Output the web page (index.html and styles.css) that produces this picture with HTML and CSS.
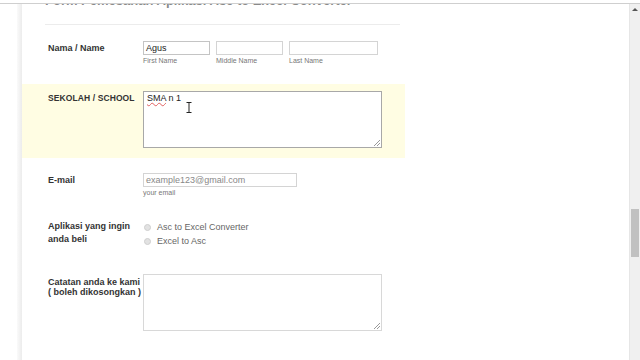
FILE: index.html
```html
<!DOCTYPE html>
<html>
<head>
<meta charset="utf-8">
<link rel="stylesheet" href="styles.css">
</head>
<body>
<div class="topline"></div>
<div class="frame">
  <div class="main">
    <div class="gutter"></div>
    <div class="shadow"></div>
    <div class="panel">
      <div class="titlebox">
        <div class="title">Form Pemesanan Aplikasi Asc to Excel Converter</div>
      </div>
      <div class="row row-name">
        <div class="label">Nama / Name</div>
        <div class="field names">
          <div class="namecol">
            <div class="input in-first">Agus</div>
            <div class="sub">First Name</div>
          </div>
          <div class="namecol">
            <div class="input in-middle"></div>
            <div class="sub">Middle Name</div>
          </div>
          <div class="namecol">
            <div class="input in-last"></div>
            <div class="sub">Last Name</div>
          </div>
        </div>
      </div>
      <div class="row row-school">
        <div class="label label-upper">SEKOLAH / SCHOOL</div>
        <div class="field">
          <div class="textarea ta-active"><span class="spell">SMA</span> n 1<svg class="ibeam" width="6" height="11" viewBox="0 0 6 11"><path d="M0.5 0.5h5M3 0.5v10M0.5 10.5h5" stroke="#222" stroke-width="1" fill="none"/></svg></div>
        </div>
      </div>
      <div class="row row-email">
        <div class="label">E-mail</div>
        <div class="field">
          <div class="input in-email">example123@gmail.com</div>
          <div class="sub">your email</div>
        </div>
      </div>
      <div class="row row-app">
        <div class="label label-multi">Aplikasi yang ingin<br>anda beli</div>
        <div class="field radios">
          <div class="radio"><span class="dot"></span>Asc to Excel Converter</div>
          <div class="radio"><span class="dot"></span>Excel to Asc</div>
        </div>
      </div>
      <div class="row row-note">
        <div class="label label-note">Catatan anda ke kami<br>( boleh dikosongkan )</div>
        <div class="field">
          <div class="textarea ta-note"></div>
        </div>
      </div>
    </div>
  </div>
  <div class="scrollbar">
    <div class="arrow"></div>
    <div class="thumb"></div>
  </div>
</div>
</body>
</html>
```

FILE: styles.css
```css
* { box-sizing: border-box; }
html, body { margin: 0; padding: 0; }
body {
  width: 640px;
  height: 360px;
  overflow: hidden;
  background: #fff;
  font-family: "Liberation Sans", Arial, sans-serif;
  color: #333;
}
.topline {
  height: 4px;
  border-bottom: 1px solid #cfcfcf;
  background: #fff;
}
.frame {
  display: flex;
  height: 356px;
}
.main {
  flex: 1;
  display: flex;
}
.gutter { width: 17px; background: #fff; }
.shadow {
  width: 5px;
  background: linear-gradient(to right, #fafafa, #ececec);
}
.panel {
  width: 383px;
  background: #fff;
}
.titlebox {
  height: 21px;
  overflow: hidden;
  margin-left: 23px;
  border-bottom: 1px solid #ececec;
  margin-right: 5px;
}
.title {
  margin-top: -9px;
  font-size: 13px;
  font-weight: bold;
  color: #8a8a8a;
  line-height: 12px;
}
.row {
  display: flex;
  padding-left: 26px;
}
.label {
  width: 95px;
  flex: none;
  font-size: 9px;
  font-weight: bold;
  color: #333;
  line-height: 14px;
}
.label-upper { font-size: 8.5px; line-height: 12px; padding-top: 1px; letter-spacing: 0.1px; }
.label-multi { line-height: 13px; padding-top: 0; }
.label-note { line-height: 10px; padding-top: 3px; }
.field { display: flex; flex-direction: column; }
.names { flex-direction: row; gap: 6px; }
.namecol { display: flex; flex-direction: column; }
.input {
  height: 14px;
  border: 1px solid #d4d4d4;
  background: #fff;
  font-size: 9px;
  line-height: 12px;
  padding-left: 2px;
  color: #222;
}
.in-first { width: 67px; border-color: #c4c4c4; }
.in-middle { width: 67px; }
.in-last { width: 89px; }
.in-email { width: 154px; color: #888; }
.sub {
  font-size: 7px;
  color: #777;
  line-height: 10px;
  padding-top: 1px;
}
.row-name { padding-top: 16px; padding-bottom: 18px; }
.row-school {
  background: #fffde3;
  padding-top: 7px;
  padding-bottom: 10px;
}
.row-email { padding-top: 15px; }
.row-app { padding-top: 22px; }
.row-note { padding-top: 26px; }
.textarea {
  position: relative;
  width: 239px;
  height: 57px;
  border: 1px solid #d8d8d8;
  background: #fff;
  font-size: 9px;
  line-height: 12px;
  padding: 0 0 0 3px;
  color: #222;
}
.ta-active { border-color: #a8a8a8; }
.textarea::after {
  content: "";
  position: absolute;
  right: 1px;
  bottom: 1px;
  width: 6px;
  height: 6px;
  background: linear-gradient(135deg, transparent 45%, #999 45%, #999 55%, transparent 55%, transparent 70%, #999 70%, #999 80%, transparent 80%);
}
.spell {
  text-decoration: underline wavy #e06060;
  text-decoration-thickness: 1px;
  text-underline-offset: 1px;
}
.ibeam {
  position: absolute;
  left: 42px;
  top: 10px;
}
.radios { padding-top: 0; }
.radio {
  display: flex;
  align-items: center;
  height: 14px;
  font-size: 9px;
  color: #666;
}
.dot {
  width: 7px;
  height: 7px;
  border-radius: 50%;
  background: #e2e2e2;
  border: 1px solid #cfcfcf;
  margin-left: 1px;
  margin-right: 6px;
}
.scrollbar {
  width: 11px;
  background: #f0f0f0;
  border-left: 1px solid #e6e6e6;
  display: flex;
  flex-direction: column;
  align-items: center;
}
.arrow {
  margin-top: 4px;
  width: 0;
  height: 0;
  border-left: 3px solid transparent;
  border-right: 3px solid transparent;
  border-bottom: 3px solid #555;
}
.thumb {
  margin-top: 198px;
  width: 8px;
  height: 48px;
  background: #c1c1c1;
}
```
